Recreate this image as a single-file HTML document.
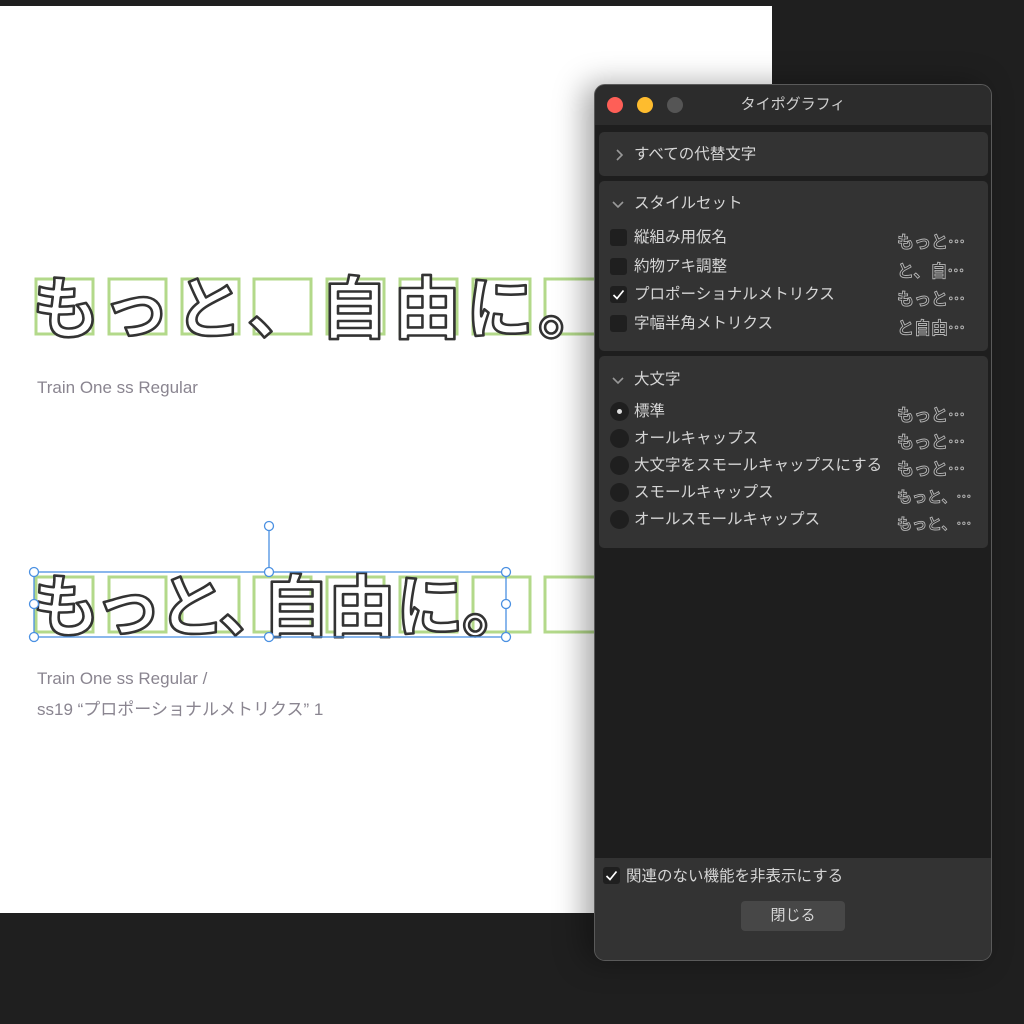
<!DOCTYPE html>
<html><head><meta charset="utf-8"><style>
body{margin:0;width:1024px;height:1024px;background:#1f1f1f;position:relative;overflow:hidden;font-family:"Liberation Sans","Noto Sans CJK JP",sans-serif}
.page{position:absolute;left:0;top:6px;width:772px;height:907px;background:#fff}
.cap{position:absolute;left:37px;color:#8a8590;font-size:17px;font-family:"Liberation Sans","Noto Sans CJK JP",sans-serif}
.panel{position:absolute;left:594px;top:84px;width:396px;height:875px;background:#333;border:1px solid #5a5a5a;border-radius:11px;box-shadow:-10px 0 30px rgba(0,0,0,.35);overflow:hidden}
.title{position:absolute;top:0;left:0;right:0;height:40px;background:#2c2c2c;color:#cfcfcf;font-size:15px;text-align:center;line-height:40px}
.dot{position:absolute;top:12px;width:16px;height:16px;border-radius:50%}
.content{position:absolute;top:40px;left:0;right:0;height:733px;background:#1e1e1e}
.sec{position:absolute;left:4px;width:389px;background:#333;border-radius:5px}
.t{position:absolute;color:#d6d6d6;font-size:15.5px;white-space:nowrap;line-height:18px}
.chev{position:absolute}
.cb{position:absolute;left:11px;width:17px;height:17px;background:#1f1f1f;border-radius:3px}
.cb svg{position:absolute;left:2px;top:3px}
.rd{position:absolute;left:11px;width:19px;height:19px;background:#1f1f1f;border-radius:50%}
.pv{position:absolute;left:298px;font-size:17px;color:#2e2e2e;-webkit-text-stroke:0.9px #b5b5b5;font-weight:700;font-family:"Noto Sans CJK JP",sans-serif;white-space:nowrap;line-height:20px}
.bottom{position:absolute;top:773px;left:0;right:0;bottom:0;background:#333}
.btn{position:absolute;left:146px;top:43px;width:104px;height:30px;background:#474747;border-radius:4px;color:#d6d6d6;font-size:15px;text-align:center;line-height:30px}
</style></head><body>
<div class="page">
<svg width="772" height="907" style="position:absolute;left:0;top:-6px">
<g fill="none" stroke="#b3d98a" stroke-width="3">
<rect x="36" y="279" width="57" height="55"/><rect x="109" y="279" width="57" height="55"/><rect x="182" y="279" width="57" height="55"/><rect x="254" y="279" width="57" height="55"/><rect x="327" y="279" width="57" height="55"/><rect x="400" y="279" width="57" height="55"/><rect x="473" y="279" width="57" height="55"/><rect x="545" y="279" width="57" height="55"/>
<rect x="36" y="577" width="57" height="55"/><rect x="109" y="577" width="57" height="55"/><rect x="182" y="577" width="57" height="55"/><rect x="254" y="577" width="57" height="55"/><rect x="327" y="577" width="57" height="55"/><rect x="400" y="577" width="57" height="55"/><rect x="473" y="577" width="57" height="55"/><rect x="545" y="577" width="57" height="55"/>
</g>
<g font-family="Noto Sans CJK JP, sans-serif" font-size="68" font-weight="700" fill="#fff" stroke="#333" stroke-width="2.6" stroke-linejoin="round">
<text x="32" y="333">も</text><text x="102" y="333">っ</text><text x="175" y="333">と</text><text x="247" y="333">、</text><text x="320" y="333">自</text><text x="393" y="333">由</text><text x="466" y="333">に</text><text x="538" y="333">。</text>
<text x="32" y="631">も</text><text x="94" y="631">っ</text><text x="158" y="631">と</text><text x="218" y="631">、</text><text x="262" y="631">自</text><text x="328" y="631">由</text><text x="396" y="631">に</text><text x="462" y="631">。</text>
</g>
<g fill="#fff" stroke="#4a90e2" stroke-width="1.3">
<line x1="269" y1="526" x2="269" y2="572"/>
<rect x="34" y="572" width="472" height="65" fill="none"/>
<circle cx="269" cy="526" r="4.5"/>
<circle cx="34" cy="572" r="4.5"/><circle cx="269" cy="572" r="4.5"/><circle cx="506" cy="572" r="4.5"/>
<circle cx="34" cy="604" r="4.5"/><circle cx="506" cy="604" r="4.5"/>
<circle cx="34" cy="637" r="4.5"/><circle cx="269" cy="637" r="4.5"/><circle cx="506" cy="637" r="4.5"/>
</g>
</svg>
<div class="cap" style="top:372px">Train One ss Regular</div>
<div class="cap" style="top:663px">Train One ss Regular /</div>
<div class="cap" style="top:689px">ss19 “プロポーショナルメトリクス” 1</div>
</div>
<div class="panel">
<div class="title">タイポグラフィ</div>
<div class="dot" style="left:12px;background:#fe5f57"></div>
<div class="dot" style="left:42px;background:#febc2e"></div>
<div class="dot" style="left:72px;background:#555"></div>
<div class="content">
<div class="sec" style="top:7px;height:44px"><svg class="chev" style="left:16px;top:17px" width="8" height="12"><path d="M2 1l5 5-5 5" fill="none" stroke="#999" stroke-width="1.6"/></svg><span class="t" style="left:35px;top:14px">すべての代替文字</span></div>
<div class="sec" style="top:56px;height:170px">
<svg class="chev" style="left:13px;top:20px" width="12" height="8"><path d="M1 1l5 5 5-5" fill="none" stroke="#999" stroke-width="1.6"/></svg><span class="t" style="left:35px;top:14px">スタイルセット</span>
<div class="cb" style="top:48px"></div><span class="t" style="left:35px;top:48px">縦組み用仮名</span><span class="pv" style="top:50px">もっと…</span>
<div class="cb" style="top:77px"></div><span class="t" style="left:35px;top:77px">約物アキ調整</span><span class="pv" style="top:79px">と、自…</span>
<div class="cb" style="top:105px"><svg width="13" height="11"><path d="M1.5 6l3.5 3.5 6.5-8" fill="none" stroke="#fff" stroke-width="1.7"/></svg></div><span class="t" style="left:35px;top:105px">プロポーショナルメトリクス</span><span class="pv" style="top:107px">もっと…</span>
<div class="cb" style="top:134px"></div><span class="t" style="left:35px;top:134px">字幅半角メトリクス</span><span class="pv" style="top:136px">と自由…</span>
</div>
<div class="sec" style="top:231px;height:192px">
<svg class="chev" style="left:13px;top:21px" width="12" height="8"><path d="M1 1l5 5 5-5" fill="none" stroke="#999" stroke-width="1.6"/></svg><span class="t" style="left:35px;top:15px">大文字</span>
<div class="rd" style="top:46px"><div style="position:absolute;left:7px;top:7px;width:5px;height:5px;border-radius:50%;background:#ddd"></div></div><span class="t" style="left:35px;top:47px">標準</span><span class="pv" style="top:48px">もっと…</span>
<div class="rd" style="top:73px"></div><span class="t" style="left:35px;top:74px">オールキャップス</span><span class="pv" style="top:75px">もっと…</span>
<div class="rd" style="top:100px"></div><span class="t" style="left:35px;top:101px">大文字をスモールキャップスにする</span><span class="pv" style="top:102px">もっと…</span>
<div class="rd" style="top:127px"></div><span class="t" style="left:35px;top:128px">スモールキャップス</span><span class="pv" style="top:131px;font-size:15px">もっと、…</span>
<div class="rd" style="top:154px"></div><span class="t" style="left:35px;top:155px">オールスモールキャップス</span><span class="pv" style="top:158px;font-size:15px">もっと、…</span>
</div>
</div>
<div class="bottom">
<div class="cb" style="top:9px;left:8px"><svg width="13" height="11"><path d="M1.5 6l3.5 3.5 6.5-8" fill="none" stroke="#fff" stroke-width="1.7"/></svg></div><span class="t" style="left:31px;top:10px">関連のない機能を非表示にする</span>
<div class="btn">閉じる</div>
</div>
</div>
</body></html>
